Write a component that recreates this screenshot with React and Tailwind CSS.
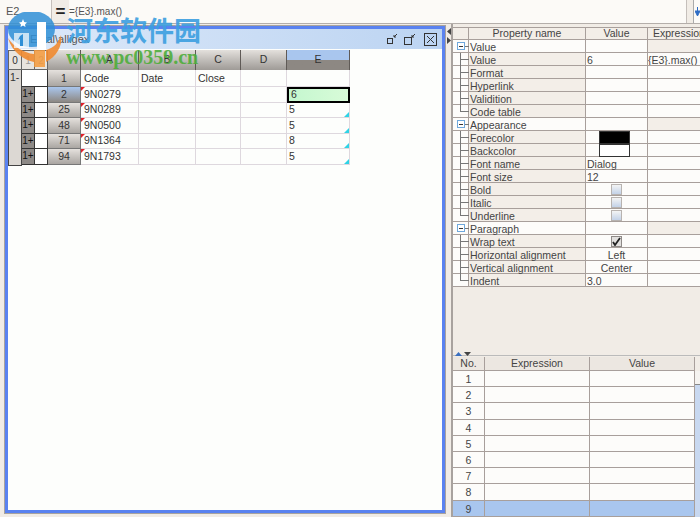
import React from 'react'

const props = [
  { name: 'Value', group: true },
  { name: 'Value', value: '6', expr: '{E3}.max()' },
  { name: 'Format' },
  { name: 'Hyperlink' },
  { name: 'Validition' },
  { name: 'Code table', last: true },
  { name: 'Appearance', group: true },
  { name: 'Forecolor', swatch: 'black' },
  { name: 'Backcolor', swatch: 'white' },
  { name: 'Font name', value: 'Dialog' },
  { name: 'Font size', value: '12' },
  { name: 'Bold', check: 'off' },
  { name: 'Italic', check: 'off' },
  { name: 'Underline', check: 'off', last: true },
  { name: 'Paragraph', group: true },
  { name: 'Wrap text', check: 'on' },
  { name: 'Horizontal alignment', center: 'Left' },
  { name: 'Vertical alignment', center: 'Center' },
  { name: 'Indent', value: '3.0', last: true },
]

const sheetRows = [
  { no: '2', code: '9N0279', e: '6', active: true },
  { no: '25', code: '9N0289', e: '5' },
  { no: '48', code: '9N0500', e: '5' },
  { no: '71', code: '9N1364', e: '8' },
  { no: '94', code: '9N1793', e: '5' },
]

function Tree({ group, last }) {
  return (
    <div className="relative w-[16px] shrink-0 border-r border-[#a89f9b] bg-[#fdfcfa]">
      {group ? (
        <>
          <div className="absolute left-[4px] top-[2px] w-[8px] h-[8px] border border-[#6fa8dc] bg-white" />
          <div className="absolute left-[6px] top-[6px] w-[4px] h-px bg-[#333]" />
          <div className="absolute left-[12px] top-[6px] w-[4px] h-px bg-[#777]" />
        </>
      ) : (
        <>
          <div className={'absolute left-[7px] top-0 w-px bg-[#777] ' + (last ? 'h-[7px]' : 'h-[13px]')} />
          <div className="absolute left-[7px] top-[6px] w-[9px] h-px bg-[#777]" />
        </>
      )}
    </div>
  )
}

function Check({ on }) {
  return (
    <div className={'w-[11px] h-[11px] border flex items-center justify-center ' + (on ? 'border-[#8f8a87] bg-[#e2e0de]' : 'border-[#b8b3b0] bg-gradient-to-b from-[#f4f4f4] to-[#c3d2e8]')}>
      {on && (
        <svg width="9" height="9" viewBox="0 0 9 9">
          <path d="M1 5 L3 8 L8 1" fill="none" stroke="#222" strokeWidth="1.8" />
        </svg>
      )}
    </div>
  )
}

function PropRow({ p }) {
  return (
    <div className="flex h-[13px] shrink-0 border-b border-[#a89f9b] leading-[14px]">
      <Tree group={p.group} last={p.last} />
      <div className={'w-[117px] shrink-0 border-r border-[#a89f9b] pl-px ' + (p.group ? 'bg-[#fdfcfa]' : 'bg-[#f3eee8]')}>{p.name}</div>
      <div className="w-[62px] shrink-0 border-r border-[#a89f9b] flex justify-center bg-[#fdfcfa]">
        {p.value && <span className="w-full pl-px">{p.value}</span>}
        {p.center && <span>{p.center}</span>}
        {p.check && <div className="pt-px"><Check on={p.check === 'on'} /></div>}
        {p.swatch && <div className={'w-[31px] h-[13px] mr-[5px] border border-[#333] ' + (p.swatch === 'black' ? 'bg-black' : 'bg-white')} />}
      </div>
      <div className={'flex-1 whitespace-nowrap overflow-hidden ' + (p.group ? 'bg-[#f3eee8]' : 'bg-[#fdfcfa]')}>{p.expr}</div>
    </div>
  )
}

function Head({ children, w, active }) {
  return (
    <div className={w + ' shrink-0 h-[20px] flex items-center justify-center border-r border-[#5f5a56] ' + (active ? 'bg-gradient-to-b from-[#a9c6ee] from-50% to-[#8d8883] to-50%' : 'bg-gradient-to-b from-[#e3e0dc] to-[#9f9b97]')}>
      {children}
    </div>
  )
}

function SheetRow({ r }) {
  const cell = 'shrink-0 border-r border-b border-[#ded8de] flex items-center pl-[3px] pt-px h-full'
  return (
    <div className="flex h-[15.5px]">
      <div className="w-[14px] shrink-0 h-full bg-[#dcd8d3] border-x border-[#444]" />
      <div className="w-[13px] shrink-0 h-full bg-[#8e8a87] border-r border-b border-[#333] text-[10px] leading-none flex items-center justify-center text-[#111]">1+</div>
      <div className="w-[13px] shrink-0 h-full bg-white border-r border-b border-[#333]" />
      <div className={'w-[33px] shrink-0 h-full flex items-center justify-center pt-px border-r border-b border-[#777] ' + (r.active ? 'bg-gradient-to-b from-[#a9c6ee] to-[#8d8883]' : 'bg-gradient-to-b from-[#e5e1dd] to-[#aaa6a2]')}>{r.no}</div>
      <div className={cell + ' relative w-[58px]'}>
        <div className="absolute left-0 top-0 w-0 h-0 border-t-[4px] border-r-[4px] border-t-[#e0202a] border-r-transparent" />
        {r.code}
      </div>
      <div className={cell + ' w-[57px]'} />
      <div className={cell + ' w-[45px]'} />
      <div className={cell + ' w-[46px]'} />
      <div className={'relative w-[63px] shrink-0 flex items-center pl-[2px] h-full ' + (r.active ? 'border-[2px] border-black bg-gradient-to-r from-[#c4f7cf] to-[#d8fbd8]' : 'border-r border-b border-[#ded8de] pt-px')}>
        {r.e}
        {!r.active && <div className="absolute right-0 bottom-0 w-0 h-0 border-b-[5px] border-l-[5px] border-b-[#2fd3e6] border-l-transparent" />}
      </div>
    </div>
  )
}

function Sheet() {
  return (
    <div className="w-[342px] text-[10.5px] text-[#333]">
      <div className="flex">
        <div className="w-[14px] h-[20px] bg-[#e8e4df] border border-[#666] flex items-center justify-center text-[10px]">0</div>
        <div className="w-[13px] h-[20px] bg-[#e8e4df] border-y border-r border-[#666] flex items-center justify-center text-[10px] text-[#999]">1</div>
        <div className="w-[13px] h-[20px] bg-[#e8e4df] border-y border-r border-[#666] flex items-center justify-center text-[10px] text-[#999]">2</div>
        <Head w="w-[33px]" />
        <Head w="w-[58px]">A</Head>
        <Head w="w-[57px]">B</Head>
        <Head w="w-[45px]">C</Head>
        <Head w="w-[46px]">D</Head>
        <Head w="w-[63px]" active>E</Head>
      </div>
      <div className="flex h-[17px]">
        <div className="w-[14px] shrink-0 bg-[#dcd8d3] border-x border-[#444] pl-px leading-[14px]">1-</div>
        <div className="w-[26px] shrink-0 bg-white border-r border-b border-[#333]" />
        <div className="w-[33px] shrink-0 flex items-center justify-center pt-[2px] border-r border-b border-[#777] bg-gradient-to-b from-[#e5e1dd] to-[#aaa6a2]">1</div>
        <div className="w-[58px] shrink-0 border-r border-b border-[#ded8de] pl-[3px] pt-[2px] flex items-center">Code</div>
        <div className="w-[57px] shrink-0 border-r border-b border-[#ded8de] pl-[2px] pt-[2px] flex items-center">Date</div>
        <div className="w-[45px] shrink-0 border-r border-b border-[#ded8de] pl-[2px] pt-[2px] flex items-center">Close</div>
        <div className="w-[46px] shrink-0 border-r border-b border-[#ded8de]" />
        <div className="w-[63px] shrink-0 border-r border-b border-[#ded8de]" />
      </div>
      {sheetRows.map((r) => <SheetRow key={r.no} r={r} />)}
      <div className="w-[14px] h-px bg-[#444]" />
    </div>
  )
}

function Watermark() {
  return (
    <div className="absolute left-0 top-[12px] w-[210px] h-[58px] pointer-events-none">
      <svg className="absolute left-[6px] top-0" width="60" height="58" viewBox="0 0 60 58">
        <ellipse cx="25.5" cy="17" rx="23.5" ry="18" fill="#2f8fd6" opacity="0.85" />
        <path d="M2 26 C6 40 18 48 28 50 L28 42 C18 41 8 35 2 26 Z" fill="#f08a30" opacity="0.9" />
        <path d="M40 50 L40 38 C48 36 53 30 55 23 C57 34 50 45 40 50 Z" fill="#f08a30" opacity="0.9" />
        <rect x="28" y="38" width="11" height="17" fill="#f59a3c" opacity="0.85" />
        <rect x="31" y="10" width="9" height="28" fill="#ffffff" />
        <rect x="8" y="21" width="15" height="15" fill="#ffffff" opacity="0.7" />
        <path d="M14 24 L17 22 V34 H14 V27 L12 28 Z" fill="#2f8fd6" />
        <path d="M17 7 L18.2 10 L21 10.4 L19 12.4 L19.5 15 L17 13.6 L14.5 15 L15 12.4 L13 10.4 L15.8 10 Z" fill="#ffffff" />
      </svg>
      <div className='absolute left-[66px] top-[2px] text-[27px] leading-[32px] font-bold text-[#3c9fe0] whitespace-nowrap font-["Noto_Sans_CJK_SC",sans-serif] opacity-90'>河东软件园</div>
      <div className='absolute left-[66px] top-[35px] text-[20px] leading-[20px] font-bold text-[#4fae3c] whitespace-nowrap font-["Liberation_Serif",serif] opacity-90'>www.pc0359.cn</div>
    </div>
  )
}

export default function App() {
  return (
    <div className='relative w-[700px] h-[517px] overflow-hidden flex flex-col bg-[#f1ece6] text-[10.5px] text-[#444] font-["Liberation_Sans",Arial,sans-serif]'>
      {/* formula bar */}
      <div className="flex h-[24px] shrink-0 border-b border-[#b4aeaa]">
        <div className="w-[52px] bg-[#fbf9f6] border-r border-[#c5bfbb] pl-[6px] flex items-center text-[11px] text-[#555]">E2</div>
        <div className="w-[17px] flex items-center justify-center text-[17px] font-bold text-[#222]">=</div>
        <div className="w-[618px] bg-[#fcfaf7] border-r border-[#c5bfbb] flex items-center text-[10px] text-[#555]">={'{E3}'}.max()</div>
        <div className="w-[7px] ml-[6px] bg-[#fcfaf7] border-l border-[#aaa] flex items-center justify-end">
          <svg width="5" height="9" viewBox="0 0 5 9"><path d="M2.5 0 V5 M0 4 L2.5 9 L5 4 Z" fill="#2f6cc4" stroke="#2f6cc4" /></svg>
        </div>
      </div>

      <div className="flex flex-1 min-h-0">
        {/* sheet window */}
        <div className="w-[447px] shrink-0 pl-[5px] pt-[2px] pb-[4px] pr-[2px]">
          <div className="h-full border-[3px] border-[#5a82f0] flex flex-col bg-[#fdfefc] outline outline-[#a8a29e]">
            <div className="h-[20px] shrink-0 bg-gradient-to-r from-[#dde9f9] to-[#bcd4f2] flex items-center justify-end gap-[5px] pr-[5px] pl-[22px]">
              <span className="mr-auto text-[11px] text-[#555]">E:\tal\alligex</span>
              <svg width="12" height="12" viewBox="0 0 12 12" fill="none" stroke="#333"><rect x="1.5" y="5.5" width="5" height="5" /><path d="M8 4 L11 1 M8 2 V4 H10" /></svg>
              <svg width="13" height="13" viewBox="0 0 13 13" fill="none" stroke="#333"><rect x="1.5" y="4.5" width="7" height="7" /><path d="M9 4 L12 1 M9 2 V4 H11" /></svg>
              <svg className="ml-[3px]" width="13" height="13" viewBox="0 0 13 13" fill="none" stroke="#333"><rect x="0.5" y="0.5" width="12" height="12" /><path d="M3 3 L10 10 M10 3 L3 10" /></svg>
            </div>
            <div className="flex-1 pt-px">
              <Sheet />
            </div>
          </div>
        </div>

        {/* splitter arrows */}
        <div className="w-[4px] shrink-0 flex flex-col gap-[2px] pt-[4px]">
          <svg width="4" height="7" viewBox="0 0 4 7"><path d="M4 0 V7 L0 3.5 Z" fill="#444" /></svg>
          <svg width="4" height="7" viewBox="0 0 4 7"><path d="M0 0 V7 L4 3.5 Z" fill="#444" /></svg>
        </div>

        {/* right side */}
        <div className="flex-1 min-w-0 flex flex-col border-l-[2px] border-[#a8a29e] pt-[3px]">
          <div className="h-[13px] flex text-center border-y border-[#a89f9b] bg-[#f3eee8] leading-[11px] shrink-0">
            <div className="w-[16px] shrink-0 border-r border-[#a89f9b]" />
            <div className="w-[117px] shrink-0 border-r border-[#a89f9b]">Property name</div>
            <div className="w-[62px] shrink-0 border-r border-[#a89f9b]">Value</div>
            <div className="flex-1 whitespace-nowrap overflow-hidden text-left pl-[5px]">Expression</div>
          </div>
          {props.map((p, i) => <PropRow key={i} p={p} />)}

          <div className="h-[70px] shrink-0 flex flex-col justify-end">
            <div className="h-[4px] mb-px flex items-center gap-[2px] pl-[2px] border-b border-[#bbb]">
              <svg width="7" height="4" viewBox="0 0 7 4"><path d="M0 4 L3.5 0 L7 4 Z" fill="#3a6fc0" /></svg>
              <svg width="7" height="4" viewBox="0 0 7 4"><path d="M0 0 L7 0 L3.5 4 Z" fill="#444" /></svg>
            </div>
          </div>

          <div className="flex-1 min-h-0 overflow-hidden flex">
            <div className="flex-1">
              <div className="h-[14px] flex text-center items-center border-b border-[#a89f9b] bg-[#ece7e1]">
                <div className="w-[32px] border-r border-[#a89f9b]">No.</div>
                <div className="w-[105px] border-r border-[#a89f9b]">Expression</div>
                <div className="w-[105px] border-r border-[#a89f9b]">Value</div>
              </div>
              {[1, 2, 3, 4, 5, 6, 7, 8, 9].map((n) => (
                <div key={n} className={'h-[16.2px] flex items-center text-center border-b border-[#a89f9b] ' + (n === 9 ? 'bg-[#a9c6ee]' : 'bg-[#fdfcfa]')}>
                  <div className="w-[32px] h-full border-r border-[#a89f9b] leading-[16px]">{n}</div>
                  <div className="w-[105px] h-full border-r border-[#a89f9b]" />
                  <div className="w-[105px] h-full border-r border-[#a89f9b]" />
                </div>
              ))}
            </div>
            <div className="w-[5px] shrink-0 flex flex-col pt-[14px] bg-[#f1ece6]">
              <div className="h-[14px] shrink-0 bg-[#f5f3f0] border-b border-[#888]" />
              <div className="flex-1 bg-[#c8d8f0]" />
            </div>
          </div>
        </div>
      </div>

      <Watermark />
    </div>
  )
}
